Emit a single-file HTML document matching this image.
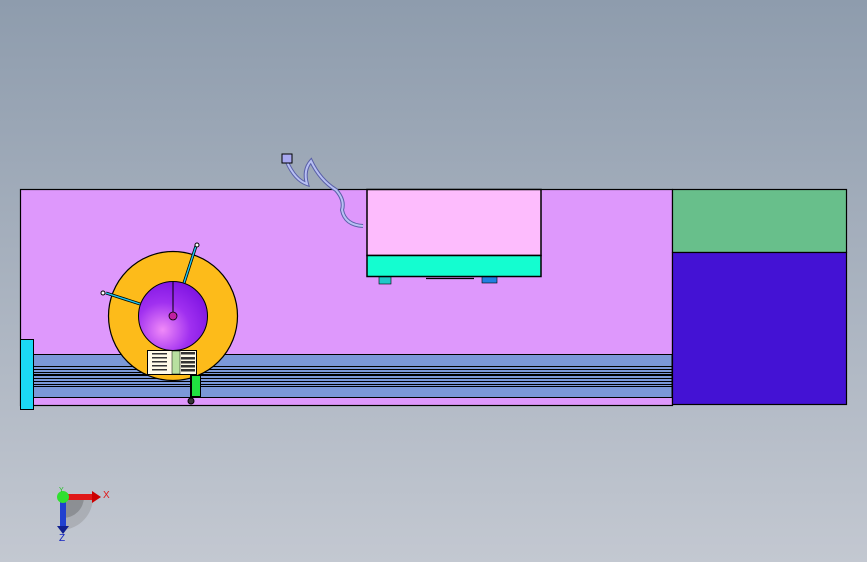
<!DOCTYPE html>
<html><head><meta charset="utf-8"><style>
html,body{margin:0;padding:0;width:867px;height:562px;overflow:hidden}
body{background:linear-gradient(#8e9cad,#c3c8d1)}
svg{position:absolute;left:0;top:0}
</style></head><body>
<svg width="867" height="562" viewBox="0 0 867 562">
<defs>
<radialGradient id="cone" cx="0.35" cy="0.7" r="0.8">
<stop offset="0" stop-color="#f08af8"/><stop offset="0.5" stop-color="#a030f0"/><stop offset="1" stop-color="#7a10e0"/>
</radialGradient>
</defs>
<rect x="20.5" y="189.5" width="652" height="216" fill="#de98fc" stroke="#000" stroke-width="1.2"/>
<rect x="672.5" y="189.5" width="174" height="63" fill="#68bf8b" stroke="#000" stroke-width="1.2"/>
<rect x="672.5" y="252.5" width="174" height="152" fill="#4412d4" stroke="#000" stroke-width="1.2"/>
<!-- rail -->
<rect x="33" y="354.5" width="639" height="43" fill="#7b98d8" stroke="#000"/>
<g stroke="#000" stroke-width="1">
<line x1="33" y1="366.5" x2="672" y2="366.5"/><line x1="33" y1="369.5" x2="672" y2="369.5"/>
<line x1="33" y1="372.5" x2="672" y2="372.5"/><line x1="33" y1="375" x2="672" y2="375" stroke-width="2"/>
<line x1="33" y1="378.5" x2="672" y2="378.5"/><line x1="33" y1="381.5" x2="672" y2="381.5"/>
<line x1="33" y1="384.5" x2="672" y2="384.5"/><line x1="33" y1="386.5" x2="672" y2="386.5"/>
</g>
<rect x="20.5" y="339.5" width="13" height="70" fill="#1cd8f4" stroke="#000"/>
<!-- box -->
<rect x="367" y="189.5" width="174" height="66" fill="#fdbcfd" stroke="#000" stroke-width="1.5"/>
<rect x="367" y="255.5" width="174" height="21" fill="#14fdd0" stroke="#000" stroke-width="1.5"/>
<rect x="379" y="277" width="12" height="7" fill="#20c8c8" stroke="#000" stroke-width="0.6"/>
<rect x="482" y="277" width="15" height="6" fill="#2080e0" stroke="#000" stroke-width="0.6"/>
<line x1="426" y1="278.5" x2="474" y2="278.5" stroke="#000" stroke-width="1.2"/>
<!-- hose -->
<path d="M287 162 Q295 180 307 184 Q303 170 311 161 Q320 180 336 190 Q345 200 342 210 Q345 225 363 226" fill="none" stroke="#5a60a8" stroke-width="4"/>
<path d="M287 162 Q295 180 307 184 Q303 170 311 161 Q320 180 336 190 Q345 200 342 210 Q345 225 363 226" fill="none" stroke="#b8c0f4" stroke-width="2"/>
<rect x="282" y="154" width="10" height="9" fill="#a8a8f0" stroke="#000" stroke-width="1"/>
<!-- spool -->
<circle cx="173" cy="316" r="64.5" fill="#fdbb1a" stroke="#000" stroke-width="1.2"/>
<line x1="106" y1="293" x2="140" y2="304" stroke="#000" stroke-width="3"/>
<line x1="106" y1="293" x2="140" y2="304" stroke="#20c8f0" stroke-width="1.4"/>
<line x1="196" y1="246" x2="184" y2="283" stroke="#000" stroke-width="3"/>
<line x1="196" y1="246" x2="184" y2="283" stroke="#20c8f0" stroke-width="1.4"/>
<circle cx="103" cy="293" r="2" fill="#fff" stroke="#000"/>
<circle cx="197" cy="245" r="2" fill="#fff" stroke="#000"/>
<circle cx="173" cy="316" r="34.5" fill="url(#cone)" stroke="#000"/>
<line x1="173" y1="282" x2="173" y2="314" stroke="#000"/>
<circle cx="173" cy="316" r="4" fill="#c020a0" stroke="#000" stroke-width="0.8"/>
<rect x="147.5" y="350.5" width="49" height="24" fill="#fffbe8" stroke="#000"/>
<rect x="172" y="351" width="8" height="23" fill="#b8e0a0" stroke="#000" stroke-width="0.5"/>
<g fill="#333"><rect x="152" y="353" width="15" height="1.5"/><rect x="152" y="357" width="15" height="1.5"/><rect x="152" y="361" width="15" height="1.5"/><rect x="152" y="365" width="15" height="1.5"/><rect x="152" y="369" width="15" height="1.5"/>
<rect x="181" y="352" width="14" height="2.5"/><rect x="181" y="357" width="14" height="2.5"/><rect x="181" y="361" width="14" height="2.5"/><rect x="181" y="365" width="14" height="2.5"/><rect x="181" y="369" width="14" height="2.5"/></g>
<rect x="190.5" y="375.5" width="10" height="21" fill="#20e040" stroke="#000"/>
<line x1="191" y1="376" x2="191" y2="398" stroke="#000" stroke-width="2"/>
<circle cx="191" cy="401" r="3" fill="#333" stroke="#000"/>
<!-- triad -->
<path d="M63 497 L63 530 A33 33 0 0 0 93 497 Z" fill="#888" opacity="0.35"/>
<path d="M63 497 L63 518 A21 21 0 0 0 84 497 Z" fill="#555" opacity="0.35"/>
<rect x="63" y="494" width="30" height="6" fill="#e01818"/>
<path d="M92 491 L101 497 L92 503 Z" fill="#c00"/>
<rect x="60" y="497" width="6" height="30" fill="#2040d0"/>
<path d="M57 526 L69 526 L63 534 Z" fill="#102090"/>
<circle cx="63" cy="497" r="6" fill="#30e030"/>
<text x="103" y="498" font-family="Liberation Sans,sans-serif" font-size="10" fill="#e01818">X</text>
<text x="59" y="541" font-family="Liberation Sans,sans-serif" font-size="10" fill="#1020c0">Z</text>
<text x="59" y="492" font-family="Liberation Sans,sans-serif" font-size="7" fill="#20c020">Y</text>
</svg>
</body></html>
